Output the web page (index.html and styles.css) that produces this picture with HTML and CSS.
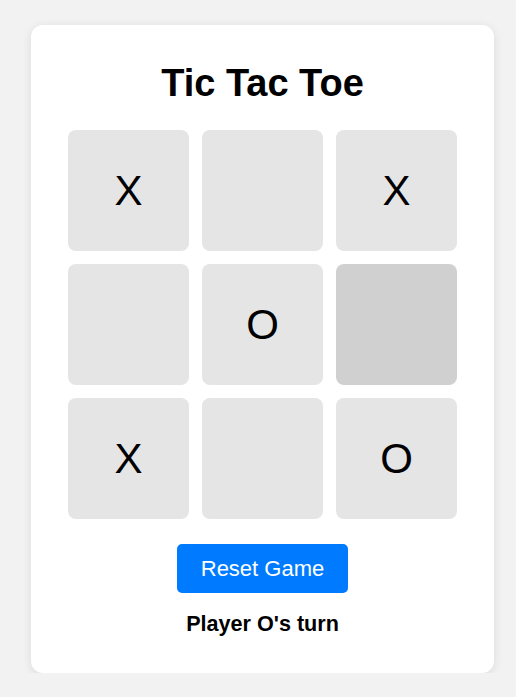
FILE: index.html
```html
<!DOCTYPE html>
<html lang="en">
<head>
<meta charset="utf-8">
<title>Tic Tac Toe</title>
<link rel="stylesheet" href="styles.css">
</head>
<body>
  <main class="card">
    <h1 class="title">Tic Tac Toe</h1>
    <div class="board">
      <div class="cell">X</div>
      <div class="cell"></div>
      <div class="cell">X</div>
      <div class="cell"></div>
      <div class="cell">O</div>
      <div class="cell cell-hover"></div>
      <div class="cell">X</div>
      <div class="cell"></div>
      <div class="cell">O</div>
    </div>
    <button class="reset">Reset Game</button>
    <p class="status">Player O's turn</p>
  </main>
</body>
</html>
```

FILE: styles.css
```css
html, body {
  margin: 0;
  padding: 0;
}
body {
  background: #f2f2f2;
  font-family: "Liberation Sans", Arial, sans-serif;
  color: #000;
  padding: 25px 0 0 31px;
}
.card {
  width: 463px;
  height: 648px;
  box-sizing: border-box;
  background: #fff;
  border-radius: 12px;
  box-shadow: 0 2px 10px rgba(0, 0, 0, 0.1);
  padding-top: 36px;
  display: flex;
  flex-direction: column;
  align-items: center;
}
.title {
  margin: 0;
  font-size: 38px;
  line-height: 44px;
  font-weight: bold;
}
.board {
  margin-top: 25px;
  display: grid;
  grid-template-columns: repeat(3, 121px);
  grid-auto-rows: 121px;
  gap: 13px;
}
.cell {
  background: #e5e5e5;
  border-radius: 8px;
  display: flex;
  align-items: center;
  justify-content: center;
  font-size: 42px;
}
.cell-hover {
  background: #d0d0d0;
}
.reset {
  margin-top: 25px;
  width: 171px;
  height: 49px;
  border: none;
  border-radius: 5px;
  background: #007bff;
  color: #fff;
  font-family: "Liberation Sans", Arial, sans-serif;
  font-size: 22px;
  padding: 0;
}
.status {
  margin: 18px 0 0;
  font-size: 21.6px;
  line-height: 25px;
  font-weight: bold;
}
```
